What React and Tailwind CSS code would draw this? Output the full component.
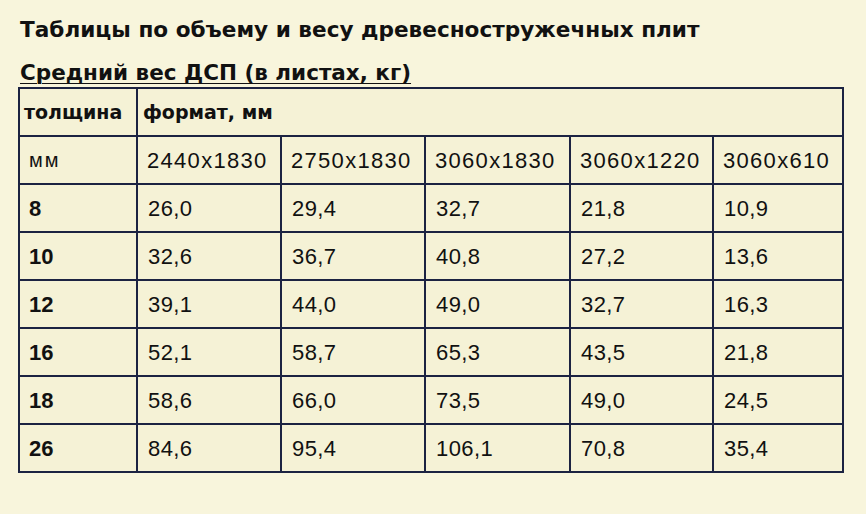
export default function App() {
  const cols = ["2440x1830", "2750x1830", "3060x1830", "3060x1220", "3060x610"];
  const rows = [
    ["8", "26,0", "29,4", "32,7", "21,8", "10,9"],
    ["10", "32,6", "36,7", "40,8", "27,2", "13,6"],
    ["12", "39,1", "44,0", "49,0", "32,7", "16,3"],
    ["16", "52,1", "58,7", "65,3", "43,5", "21,8"],
    ["18", "58,6", "66,0", "73,5", "49,0", "24,5"],
    ["26", "84,6", "95,4", "106,1", "70,8", "35,4"],
  ];
  const widths = ["w-[118px]", "w-[144px]", "w-[144px]", "w-[145px]", "w-[143px]", "w-[130px]"];
  return (
    <div className="w-[866px] h-[514px] bg-[#f8f5dc] overflow-hidden text-[#111]">
      <div className="pl-[20px] pt-[15px] h-[63px] text-[21.6px] font-bold leading-[30px] font-['DejaVu_Sans',sans-serif]">
        Таблицы по объему и весу древесностружечных плит
      </div>
      <div className="pl-[20px] h-[20px] text-[21.5px] font-bold leading-[20px] font-['DejaVu_Sans',sans-serif] underline underline-offset-[3px] decoration-[1px]">
        Средний вес ДСП (в листах, кг)
      </div>
      <div className="pl-[18px] pt-[4px]">
        <table className="table-fixed border-collapse border-2 border-[#1c2342] w-[826px]">
          <colgroup>
            {widths.map((w, i) => (
              <col key={i} className={w} />
            ))}
          </colgroup>
          <tbody>
            <tr className="h-[48px]">
              <td className="border-2 border-[#1c2342] bg-[#f5f2d6] pl-[4px] text-[19px] font-bold font-['DejaVu_Sans',sans-serif]">
                толщина
              </td>
              <td colSpan={5} className="border-2 border-[#1c2342] bg-[#f5f2d6] pl-[5px] text-[19px] font-bold font-['DejaVu_Sans',sans-serif]">
                формат, мм
              </td>
            </tr>
            <tr className="h-[48px]">
              <td className="border-2 border-[#1c2342] bg-[#f5f2d6] pl-[9px] text-[20px] tracking-[2px] font-['Liberation_Sans',sans-serif]">
                мм
              </td>
              {cols.map((c) => (
                <td key={c} className="border-2 border-[#1c2342] bg-[#f5f2d6] pl-[9px] text-[22px] tracking-[1.3px] font-['Liberation_Sans',sans-serif]">
                  {c}
                </td>
              ))}
            </tr>
            {rows.map((r) => (
              <tr key={r[0]} className="h-[48px]">
                <td className="border-2 border-[#1c2342] bg-[#f5f2d6] pl-[9px] text-[22px] font-bold font-['Liberation_Sans',sans-serif]">
                  {r[0]}
                </td>
                {r.slice(1).map((v, i) => (
                  <td key={i} className="border-2 border-[#1c2342] bg-[#f5f2d6] pl-[10px] text-[22px] tracking-[0.4px] font-['Liberation_Sans',sans-serif]">
                    {v}
                  </td>
                ))}
              </tr>
            ))}
          </tbody>
        </table>
      </div>
    </div>
  );
}
